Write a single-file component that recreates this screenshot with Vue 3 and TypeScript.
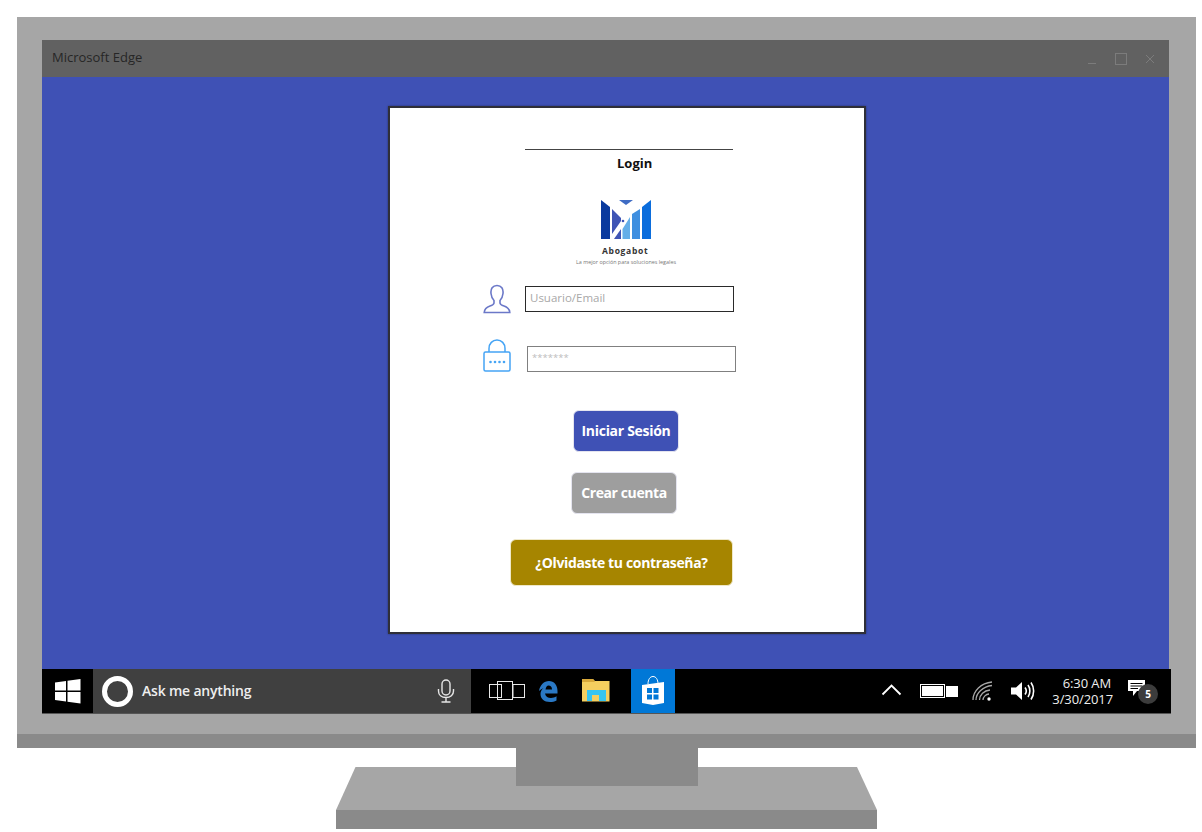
<script setup lang="ts">
const logoBars: { d: string; fill: string }[] = [
  { d: 'M1 1 L10 8 V40 H1 Z', fill: '#0a3a9e' },
  { d: 'M12 10 L21 19 V22 L12 35 Z', fill: '#3f55b5' },
  { d: 'M14 40 L21 30 V40 Z', fill: '#3f55b5' },
  { d: 'M22.500 30 L30 18 V40 H22.500 Z', fill: '#64aee8' },
  { d: 'M32 15 L40 10 V40 H32 Z', fill: '#3f8fe0' },
  { d: 'M42 8 L51 1 V40 H42 Z', fill: '#0b6ddc' },
  { d: 'M19 1 H33 L26 6 Z', fill: '#3f6cc4' },
]
</script>

<template>
  <div class="page">
    <div class="monitor">
      <div class="screen">
        <div class="titlebar">
          <span class="title">Microsoft Edge</span>
          <div class="win-controls">
            <svg width="10" height="10" viewBox="0 0 10 10"><path d="M1 9.500H9" stroke="#7c7c7c" fill="none" /></svg>
            <svg width="12" height="12" viewBox="0 0 12 12"><rect x=".5" y=".5" width="11" height="11" stroke="#7c7c7c" fill="none" /></svg>
            <svg width="10" height="10" viewBox="0 0 10 10"><path d="M1 1L9 9M9 1L1 9" stroke="#7c7c7c" fill="none" /></svg>
          </div>
        </div>

        <div class="desktop">
          <div class="card">
            <div class="rule"></div>
            <div class="login">Login</div>

            <svg class="logo" width="53" height="42" viewBox="0 0 53 42">
              <path v-for="bar in logoBars" :key="bar.d" :d="bar.d" :fill="bar.fill" />
              <circle cx="23" cy="22" r="1.300" fill="#3f55b5" />
            </svg>
            <div class="brand">Abogabot</div>
            <div class="tagline">La mejor opción para soluciones legales</div>

            <div class="field-row user-row">
              <svg class="user-icon" width="28" height="30" viewBox="0 0 28 30" fill="none" stroke="#6b78c8" stroke-width="1.600">
                <path d="M14 1.500C9.500 1.500 7.500 5 8 9.500C8.300 12.500 9.500 15 11 16.500V19C11 20.500 9.500 21.200 7 22C4 23 1.500 24.500 1.200 28.500H26.800C26.500 24.500 24 23 21 22C18.500 21.200 17 20.500 17 19V16.500C18.500 15 19.700 12.500 20 9.500C20.500 5 18.500 1.500 14 1.500Z" />
              </svg>
              <div class="input input-dark"><span class="placeholder">Usuario/Email</span></div>
            </div>

            <div class="field-row pass-row">
              <svg class="lock-icon" width="28" height="33" viewBox="0 0 28 33" fill="none" stroke="#45a4f5" stroke-width="1.500">
                <path d="M6 13V9.500C6 4.500 9.500 1 14 1C18.500 1 22 4.500 22 9.500V13" />
                <rect x="1" y="13" width="26" height="19" rx="1.500" />
                <g fill="#45a4f5" stroke="none">
                  <circle cx="7.500" cy="23" r="1.300" /><circle cx="12" cy="23" r="1.300" />
                  <circle cx="16.500" cy="23" r="1.300" /><circle cx="21" cy="23" r="1.300" />
                </g>
              </svg>
              <div class="input input-grey"><span class="stars">*******</span></div>
            </div>

            <button class="btn btn-blue">Iniciar Sesión</button>
            <button class="btn btn-grey">Crear cuenta</button>
            <button class="btn btn-gold">¿Olvidaste tu contraseña?</button>
          </div>
        </div>

        <div class="taskbar">
          <div class="start">
            <svg width="26" height="26" viewBox="0 0 26 26" fill="#fff">
              <path d="M0 4.500L11 3V12.500H0Z" /><path d="M12.500 2.800L25.500 1V12.500H12.500Z" />
              <path d="M0 14H11V23.500L0 22Z" /><path d="M12.500 14H25.500V25.500L12.500 23.700Z" />
            </svg>
          </div>
          <div class="search">
            <div class="cortana"></div>
            <span class="ask">Ask me anything</span>
            <svg class="mic" width="18" height="24" viewBox="0 0 18 24" fill="none" stroke="#e6e6e6" stroke-width="1.400">
              <rect x="5" y="1" width="8" height="15" rx="4" />
              <path d="M1.500 10V12C1.500 16 4.500 18.500 9 18.500C13.500 18.500 16.500 16 16.500 12V10M9 18.500V22.500M4.500 23H13.500" />
            </svg>
          </div>

          <svg class="task-view" width="36" height="20" viewBox="0 0 36 20" fill="none" stroke="#e8e8e8">
            <rect x=".5" y="3.500" width="12" height="13" />
            <rect x="24" y="3.500" width="11.500" height="13" />
            <rect x="8.500" y=".5" width="15" height="18" />
          </svg>

          <svg class="edge" width="20" height="23" viewBox="0 0 20 23">
            <path fill-rule="evenodd" d="M1 11C2 5 6 1 11 1C16 1 19.500 5 19.500 11V13.500H7C7.500 16.500 10 18 13 18C15 18 17 17.300 18.500 16.300V20.500C16.500 21.500 14.500 22 12 22C6 22 2.500 18.500 2.500 14C2.500 11.500 3.500 9.500 5.500 8C4 8.500 2.500 9.500 1 11Z M7.500 9.500H14C14 7 12.500 5.500 10.500 5.500C9 5.500 8 7 7.500 9.500Z" fill="#2a78c4" />
          </svg>

          <svg class="folder" width="29" height="24" viewBox="0 0 29 24">
            <path d="M1 1H12L14 3H28.500V23.500H1Z" fill="#f5cf5f" />
            <path d="M1 1H12L14 4H1Z" fill="#d9a93a" />
            <path d="M6 12H25V23H18V17H11V23H6Z" fill="#36c5f0" />
          </svg>

          <div class="store">
            <svg width="28" height="32" viewBox="0 0 28 32">
              <path d="M9 9C9 4.500 11 1.500 14 1.500C17 1.500 19 4.500 19 9" fill="none" stroke="#fff" stroke-width="1" />
              <path d="M3 10L25 7V28L14 30L3 28Z" fill="#fff" />
              <g fill="#0078d7">
                <rect x="8" y="13" width="5" height="5" /><rect x="14.500" y="13" width="5" height="5" />
                <rect x="8" y="19.500" width="5" height="5" /><rect x="14.500" y="19.500" width="5" height="5" />
              </g>
            </svg>
          </div>

          <div class="tray">
            <svg class="chev" width="21" height="12" viewBox="0 0 21 12"><path d="M1.500 10.500L10.500 1.500L19.500 10.500" fill="none" stroke="#fff" stroke-width="1.800" /></svg>
            <div class="battery"><div class="battery-body"></div><div class="battery-tip"></div></div>
            <svg class="wifi" width="22" height="20" viewBox="0 0 22 20" fill="none" stroke="#a8a8a8" stroke-width="1.300">
              <path d="M1 19C1 10 9 2 20 1" /><path d="M4 19C4 12 11 5.500 20 4.500" /><path d="M7.500 19C7.500 14 12 9.500 18 9" /><path d="M11 19C11 16 14 13 17 13" />
              <circle cx="17" cy="18" r="1.700" fill="#fff" stroke="none" />
            </svg>
            <svg class="volume" width="26" height="22" viewBox="0 0 26 22" fill="none" stroke="#fff" stroke-width="1.600">
              <path d="M1 7.500H6L12 2V20L6 14.500H1Z" fill="#fff" stroke="none" />
              <path d="M15 7.500C16.500 9.500 16.500 12.500 15 14.500" /><path d="M18 5C20.500 8.500 20.500 13.500 18 17" /><path d="M21 2.500C24.500 7.500 24.500 14.500 21 19.500" />
            </svg>
            <div class="clock"><span class="time">6:30 AM</span><span>3/30/2017</span></div>
            <div class="notify">
              <svg width="18" height="17" viewBox="0 0 18 17">
                <path d="M0 0H17V11H9L5 16V11H0Z" fill="#fff" />
                <path d="M2.500 3.500H14.500M2.500 6H14.500M2.500 8.500H10" stroke="#000" stroke-width="1" />
              </svg>
              <span class="badge">5</span>
            </div>
          </div>
        </div>
      </div>
    </div>

    <svg class="stand" width="1202" height="84" viewBox="0 0 1202 84">
      <path d="M355.500 19H857L877 62H336Z" fill="#a6a6a6" />
      <rect x="336" y="62" width="541" height="19" fill="#8a8a8a" />
      <rect x="516" y="0" width="182" height="38" fill="#8a8a8a" />
    </svg>
  </div>
</template>

<style>
html, body { margin: 0; background: #fff; }
</style>

<style scoped>
.page {
  width: 1202px;
  height: 832px;
  overflow: hidden;
  padding-top: 17px;
  box-sizing: border-box;
  font-family: "Open Sans", "Noto Sans", sans-serif;
}
.monitor {
  width: 1179px;
  height: 731px;
  margin-left: 17px;
  box-sizing: border-box;
  padding: 23px 0 0 25px;
  background: #a6a6a6;
  border-bottom: 14px solid #8a8a8a;
}
.screen { width: 1129px; }
.titlebar {
  height: 37px;
  width: 1127px;
  display: flex;
  align-items: center;
  justify-content: space-between;
  background: #616161;
  padding: 0 14px 3px 10px;
  box-sizing: border-box;
}
.title { font-size: 13px; color: #262626; }
.win-controls { display: flex; align-items: center; gap: 18px; padding-top: 3px; }
.desktop {
  width: 1127px;
  height: 592px;
  padding: 29px 0 0 346px;
  box-sizing: border-box;
  background: #3f51b5;
}
.card {
  width: 478px;
  height: 528px;
  box-sizing: border-box;
  background: #fff;
  border: 2px solid #2f2f38;
  box-shadow: 0 0 2px rgba(0, 0, 0, .4);
  display: flex;
  flex-direction: column;
  align-items: flex-start;
  padding-top: 41px;
}
.rule { width: 208px; height: 1px; margin-left: 135px; background: #444; }
.login { margin: 4px 0 0 227px; font-size: 13px; line-height: 18px; font-weight: 700; color: #111; }
.logo { margin: 27px 0 0 210px; }
.brand { margin: 4px 0 0 212px; font-size: 8.500px; line-height: 12px; font-weight: 700; letter-spacing: .7px; color: #333; }
.tagline { margin: 1px 0 0 186px; font-size: 5.400px; line-height: 8px; color: #777; white-space: nowrap; }
.field-row { display: flex; }
.user-row { margin: 18px 0 0 93px; gap: 14px; align-items: center; }
.pass-row { margin: 25px 0 0 93px; gap: 16px; align-items: flex-end; }
.input {
  width: 209px;
  height: 26px;
  box-sizing: border-box;
  display: flex;
  align-items: center;
  padding-left: 4px;
  background: #fff;
  font-size: 11.500px;
  color: #a8a8a8;
}
.placeholder { padding-bottom: 3px; }
.input-dark { border: 1.500px solid #2a2a2a; }
.input-grey { border: 1.500px solid #808080; }
.stars { font-size: 9.500px; color: #bdbdbd; padding-bottom: 4px; }
.btn {
  border: 1px solid #e4e4ef;
  border-radius: 6px;
  padding: 0 0 2px;
  color: #fff;
  font-family: "Open Sans", "Noto Sans", sans-serif;
  font-weight: 700;
  font-size: 14px;
  letter-spacing: -.3px;
}
.btn-blue { width: 106px; height: 42px; margin: 38px 0 0 183px; background: #3f51b5; }
.btn-grey { width: 106px; height: 42px; margin: 20px 0 0 181px; background: #9e9e9e; letter-spacing: -.4px; }
.btn-gold { width: 223px; height: 47px; margin: 25px 0 0 120px; background: #a68500; border-color: #efe8c8; letter-spacing: -.35px; padding: 0; }
.taskbar {
  width: 1129px;
  height: 44px;
  display: flex;
  align-items: center;
  background: #000;
  box-shadow: 0 1px 0 #555;
}
.start { width: 51px; height: 44px; display: flex; align-items: center; justify-content: center; }
.search {
  width: 378px;
  height: 44px;
  background: #404040;
  display: flex;
  align-items: center;
  box-sizing: border-box;
  padding-left: 9px;
}
.cortana { width: 21px; height: 21px; border: 5px solid #fff; border-radius: 50%; }
.ask { margin: 0 0 2px 9px; font-size: 14px; font-weight: 600; letter-spacing: -.2px; color: #eee; }
.mic { margin-left: 186px; }
.task-view { margin-left: 18px; }
.edge { margin-left: 13px; }
.folder { margin-left: 23px; margin-bottom: 2px; }
.store {
  width: 44px;
  height: 44px;
  margin-left: 21px;
  background: #0078d7;
  display: flex;
  align-items: center;
  justify-content: center;
}
.tray { display: flex; align-items: center; margin-left: 206px; color: #fff; }
.chev { margin-bottom: 2px; }
.battery { display: flex; align-items: center; margin-left: 18px; }
.battery-body { width: 25px; height: 14px; box-sizing: border-box; background: #fff; border: 1px solid #fff; outline: 1px solid #000; outline-offset: -2px; }
.battery-tip { width: 12px; height: 11px; background: #fff; margin-left: 1px; }
.wifi { margin-left: 14px; }
.volume { margin-left: 16px; }
.clock {
  display: flex;
  flex-direction: column;
  align-items: flex-end;
  width: 66px;
  margin-left: 11px;
  font-size: 13px;
  line-height: 16px;
  letter-spacing: -.1px;
  color: #eee;
}
.time { margin-right: 2px; }
.notify { position: relative; width: 30px; height: 30px; margin-left: 15px; padding-top: 4px; box-sizing: border-box; }
.badge {
  position: absolute;
  left: 10px;
  top: 8px;
  width: 20px;
  height: 20px;
  border-radius: 50%;
  background: #3c3c3c;
  color: #fff;
  font-size: 10px;
  font-weight: 700;
  line-height: 20px;
  text-align: center;
}
.stand { display: block; }
</style>
